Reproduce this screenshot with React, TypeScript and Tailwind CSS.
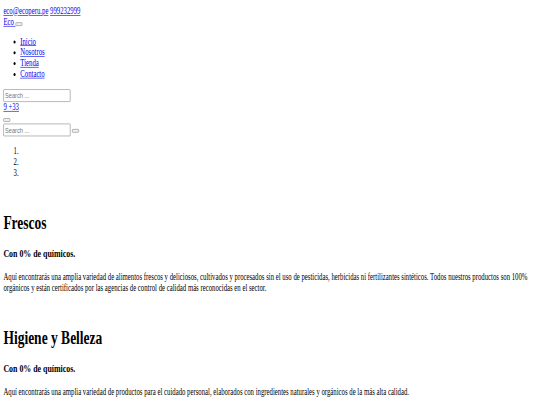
import React from "react";

// The reference is an unstyled page (browser defaults) photographed from a
// 1280px-wide window and squeezed into 540x405, so we lay it out at 1280px
// with the default browser metrics and scale it down unevenly, as the photo was.

const linkCls = "text-[#0000ee] underline";

function EmptyButton({ className = "" }: { className?: string }) {
  return (
    <button
      type="button"
      className={`inline-block h-[6px] w-[16px] rounded-[2px] border border-[#767676] bg-[#efefef] ${className}`}
    />
  );
}

function SearchInput() {
  return (
    <input
      type="text"
      placeholder="Search ..."
      className="block h-[21.3px] w-[159px] rounded-[2px] border border-[#767676] px-[3px] py-[2px] font-['Liberation_Sans',sans-serif] text-[13.33px] leading-[normal] placeholder:text-[#757575]"
    />
  );
}

const sections = [
  {
    title: "Frescos",
    sub: "Con 0% de químicos.",
    text: "Aquí encontrarás una amplia variedad de alimentos frescos y deliciosos, cultivados y procesados sin el uso de pesticidas, herbicidas ni fertilizantes sintéticos. Todos nuestros productos son 100% orgánicos y están certificados por las agencias de control de calidad más reconocidas en el sector.",
  },
  {
    title: "Higiene y Belleza",
    sub: "Con 0% de químicos.",
    text: "Aquí encontrarás una amplia variedad de productos para el cuidado personal, elaborados con ingredientes naturales y orgánicos de la más alta calidad.",
  },
];

export default function App() {
  return (
    <div className="h-[405px] w-[540px] overflow-hidden bg-white">
      <div className="w-[1280px] origin-top-left scale-x-[0.4219] scale-y-[0.603] px-2 pt-[9.5px] pb-2 font-['Liberation_Serif',serif] text-[16px] leading-[normal] text-black">
        {/* top bar */}
        <div>
          <a href="#" className={linkCls}>eco@ecoperu.pe</a>{" "}
          <a href="#" className={linkCls}>999232999</a>
        </div>
        <div>
          <a href="#" className={linkCls}>Eco </a>
          <EmptyButton />
        </div>

        {/* menu */}
        <ul className="mt-[14.5px] mb-[15.5px] list-disc pl-10">
          {["Inicio", "Nosotros", "Tienda", "Contacto"].map((item) => (
            <li key={item}>
              <a href="#" className={linkCls}>{item}</a>
            </li>
          ))}
        </ul>

        <form>
          <SearchInput />
        </form>
        <div>
          <a href="#" className={linkCls}>9 +33</a>
        </div>
        <div className="h-[18.4px]">
          <EmptyButton />
        </div>
        <form className="flex items-end">
          <SearchInput />
          <EmptyButton className="mb-[6px] ml-[4px]" />
        </form>

        {/* slider dots */}
        <ol className="my-4 list-decimal pl-10">
          <li>&nbsp;</li>
          <li>&nbsp;</li>
          <li>&nbsp;</li>
        </ol>

        {sections.map((s) => (
          <div key={s.title}>
            <div className="h-[17.5px]" />
            <h1 className="my-[21.44px] text-[32px] font-bold">{s.title}</h1>
            <h3 className="my-[18.72px] text-[18.72px] font-bold">{s.sub}</h3>
            <p className="my-4">{s.text}</p>
          </div>
        ))}
      </div>
    </div>
  );
}
